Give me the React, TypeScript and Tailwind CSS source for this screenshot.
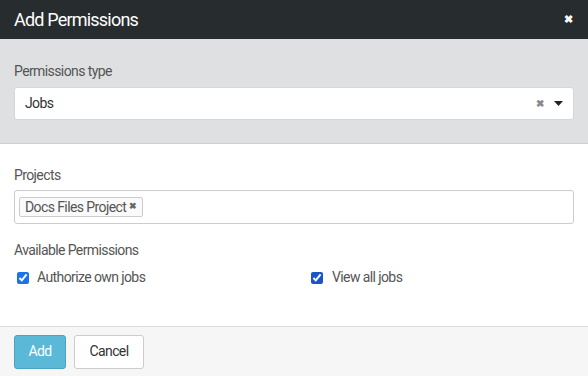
import React, { useState } from "react";

export default function App() {
  const [own, setOwn] = useState(true);
  const [viewAll, setViewAll] = useState(true);
  return (
    <div
      className="w-[588px] h-[376px] flex flex-col bg-white text-[#555] tracking-[-0.6px]"
      style={{ fontFamily: "Roboto, 'Liberation Sans', sans-serif" }}
    >
      <div className="h-[39px] shrink-0 bg-[#272d2e] flex items-center justify-between pl-[14px] pr-[16px]">
        <h1 className="text-[18px] text-white tracking-[-0.8px]">Add Permissions</h1>
        <span className="text-white text-[11px] font-bold leading-none">✖</span>
      </div>

      <div className="h-[105px] shrink-0 bg-[#dfe0e2] border-b border-[#cfd0d2] px-[14px] pt-[22px]">
        <div className="text-[14px] leading-[20px] text-[#555]">Permissions type</div>
        <div className="mt-[6px] h-[33px] bg-white rounded-[3px] border border-[#d6d7d9] flex items-center pl-[10px] pr-[10px]">
          <span className="flex-1 text-[14px] text-[#333]">Jobs</span>
          <span className="text-[#888] text-[10px] font-bold mr-[11px]">✖</span>
          <svg width="9" height="5" viewBox="0 0 9 5">
            <path d="M0 0 L9 0 L4.5 5 Z" fill="#222" />
          </svg>
        </div>
      </div>

      <div className="flex-1 px-[14px] pt-[21px]">
        <div className="text-[14px] leading-[20px]">Projects</div>
        <div className="mt-[5px] h-[34px] rounded-[3px] border border-[#ccc] flex items-center pl-[4px]">
          <span className="h-[20px] px-[5px] flex items-center gap-[3px] rounded-[2px] border border-[#ccc] bg-[#fafafa] text-[14px] text-[#555]">
            Docs Files Project
            <span className="text-[9px] font-bold text-[#666]">✖</span>
          </span>
        </div>
        <div className="mt-[16px] text-[14px] leading-[20px]">Available Permissions</div>
        <div className="mt-[7px] flex">
          <label className="w-[297px] flex items-center gap-[8px] pl-[3px] text-[14px] text-[#555]">
            <input
              type="checkbox"
              checked={own}
              onChange={() => setOwn(!own)}
              className="w-[12px] h-[12px] accent-[#1a73e8] m-0"
            />
            Authorize own jobs
          </label>
          <label className="flex items-center gap-[9px] text-[14px] text-[#555]">
            <input
              type="checkbox"
              checked={viewAll}
              onChange={() => setViewAll(!viewAll)}
              className="w-[12px] h-[12px] accent-[#1a55c8] m-0"
            />
            View all jobs
          </label>
        </div>
      </div>

      <div className="h-[50px] shrink-0 bg-[#f6f6f6] border-t border-[#ddd] flex items-center gap-[8px] px-[14px]">
        <button className="h-[34px] w-[52px] rounded-[3px] bg-[#5bb8d6] border border-[#4aa3c2] text-white text-[14px]">
          Add
        </button>
        <button className="h-[34px] w-[70px] rounded-[3px] bg-white border border-[#ccc] text-[#333] text-[14px]">
          Cancel
        </button>
      </div>
    </div>
  );
}
